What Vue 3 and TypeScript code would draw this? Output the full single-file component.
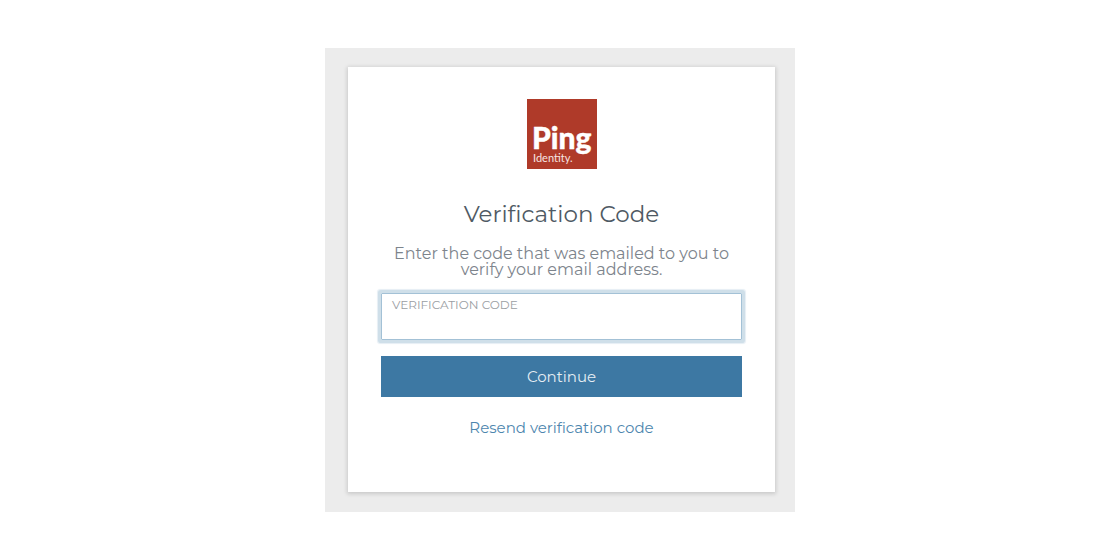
<script setup lang="ts">
import { ref } from 'vue'

const code = ref<string>('')

function submitCode(): void {
  code.value = code.value.trim()
}
</script>

<template>
  <main class="page">
    <section class="backdrop">
      <form class="card" @submit.prevent="submitCode">
        <svg class="logo" viewBox="0 0 70 70" role="img" aria-label="Ping Identity">
          <rect width="70" height="70" fill="#af3a29" />
          <text class="logo-name" x="5" y="50">Ping</text>
          <text class="logo-sub" x="6" y="63">Identity.</text>
        </svg>
        <h1 class="title">Verification Code</h1>
        <p class="message">Enter the code that was emailed to you to verify your email address.</p>
        <div class="field">
          <label class="label" for="code">VERIFICATION CODE</label>
          <input id="code" v-model="code" class="input" type="text" autocomplete="one-time-code" />
        </div>
        <button class="continue" type="submit">Continue</button>
        <a class="resend" href="#resend">Resend verification code</a>
      </form>
    </section>
  </main>
</template>

<style>
body {
  margin: 0;
  background: #ffffff;
}
</style>

<style scoped>
.page {
  display: flex;
  justify-content: center;
  padding: 48px 16px;
  font-family: Montserrat, Inter, 'Open Sans', sans-serif;
}

.backdrop {
  box-sizing: border-box;
  width: 100%;
  max-width: 470px;
  padding: 19px 20px 20px 23px;
  background: #ececec;
}

.card {
  display: flex;
  flex-direction: column;
  align-items: center;
  padding: 32px 33px 56px;
  background: #ffffff;
  box-shadow: 0 1px 4px 1px rgba(0, 0, 0, 0.15);
}

.logo {
  width: 70px;
  height: 70px;
}

.logo-name {
  fill: #ffffff;
  stroke: #ffffff;
  stroke-width: 0.4px;
  font-family: Lato, sans-serif;
  font-size: 30px;
  font-weight: 900;
}

.logo-sub {
  fill: #f6e4e1;
  font-family: Lato, sans-serif;
  font-size: 11px;
}

.title {
  margin: 29px 0 0;
  color: #4f5a64;
  font-size: 23px;
  font-weight: 400;
  line-height: 32px;
}

.message {
  max-width: 348px;
  margin: 16px 0 0;
  color: #7d848c;
  font-size: 16px;
  line-height: 16px;
  text-align: center;
}

.field {
  display: flex;
  flex-direction: column;
  box-sizing: border-box;
  width: 100%;
  margin-top: 15px;
  border: 1px solid #a3c1d6;
  border-radius: 1px;
  box-shadow: 0 0 0 3px #cfdfe9, 0 0 1px 4px #e6eef4;
}

.label {
  padding: 3px 10px 0;
  color: #9a9ea3;
  font-size: 12px;
  line-height: 16px;
}

.input {
  box-sizing: border-box;
  width: 100%;
  height: 26px;
  padding: 0 10px;
  border: 0;
  outline: 0;
  background: transparent;
  color: #4f5a64;
  font: inherit;
  font-size: 16px;
}

.continue {
  width: 100%;
  margin-top: 16px;
  padding: 12px;
  border: 0;
  background: #3d78a3;
  color: #e6eef4;
  font-family: inherit;
  font-size: 15px;
  line-height: 17px;
}

.resend {
  margin-top: 22px;
  color: #4d86ae;
  font-size: 15px;
  line-height: 17px;
  text-decoration: none;
}
</style>
